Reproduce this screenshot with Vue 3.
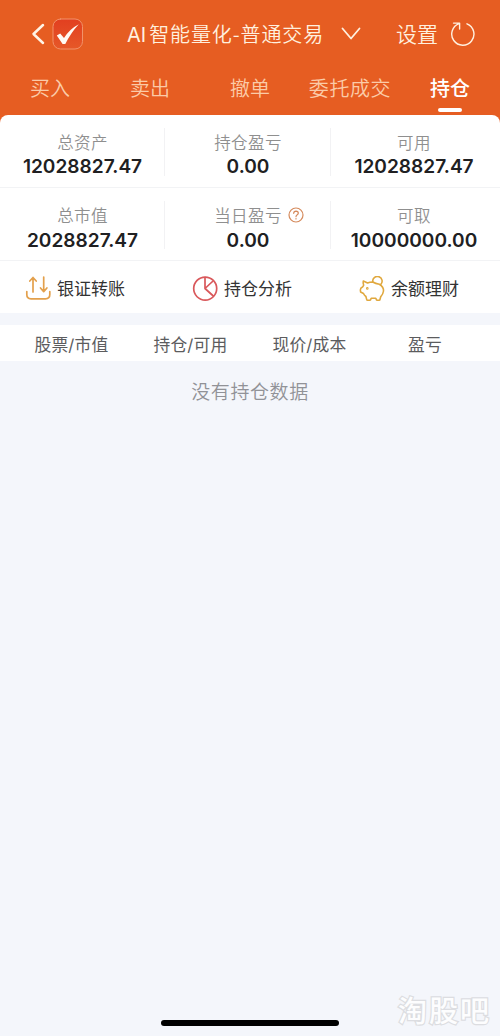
<script setup>
const tabs = ['买入', '卖出', '撤单', '委托成交', '持仓']
const assets = [
  { label: '总资产', value: '12028827.47' },
  { label: '持仓盈亏', value: '0.00' },
  { label: '可用', value: '12028827.47' },
  { label: '总市值', value: '2028827.47' },
  { label: '当日盈亏', value: '0.00', help: true },
  { label: '可取', value: '10000000.00' }
]
const columns = ['股票/市值', '持仓/可用', '现价/成本', '盈亏']
</script>

<template>
  <div class="screen">
    <header class="top">
      <div class="nav">
        <svg class="back" width="14" height="24" viewBox="0 0 14 24"><path d="M12 3 L2.500 12 L12 21" /></svg>
        <svg class="logo" width="32" height="32" viewBox="0 0 32 32">
          <defs>
            <linearGradient id="logoFill" x1="0" y1="0" x2="0" y2="1">
              <stop offset="0" stop-color="#e23f20" />
              <stop offset="1" stop-color="#e65828" />
            </linearGradient>
          </defs>
          <rect x="1" y="1" width="29.5" height="30" rx="7.5" fill="url(#logoFill)" stroke="#f2926a" stroke-width="1" />
          <path d="M4.800 17.500 L8.200 15.600 L12 20 Q17.500 11 26.800 6.200 Q19 14.500 13.300 26 L10.600 26 Z" fill="#fffaf3" />
        </svg>
        <h1 class="title">AI<span class="cjk">智能量化-普通交易</span></h1>
        <svg class="chevron" width="20" height="14" viewBox="0 0 20 14"><path d="M1.500 1.500 L10 11.500 L18.500 1.500" /></svg>
        <span class="settings">设置</span>
        <svg class="refresh" width="26" height="26" viewBox="0 0 26 26">
          <path d="M17 2.800 A11.100 11.100 0 1 1 9.200 2.600 M3.500 2.100 H9.600 V8" />
        </svg>
      </div>
      <nav class="tabs">
        <span v-for="(tab, i) in tabs" :key="tab" class="tab" :class="{ active: i === 4 }">{{ tab }}</span>
      </nav>
    </header>

    <main>
      <section class="assets">
        <div v-for="a in assets" :key="a.label" class="cell">
          <div class="label">
            <span class="label-text">{{ a.label }}
              <svg v-if="a.help" class="help" width="16" height="16" viewBox="0 0 16 16">
                <circle cx="8" cy="8" r="7" />
                <path d="M5.700 6.300 Q5.800 4.100 8 4.100 Q10.300 4.200 10.300 6.100 Q10.200 7.200 9 7.900 Q8 8.500 8 9.700 M8 11.600 V12" />
              </svg>
            </span>
          </div>
          <div class="value">{{ a.value }}</div>
        </div>
      </section>

      <section class="actions">
        <div class="action">
          <svg width="26" height="26" viewBox="0 0 26 26" class="transfer">
            <path d="M1.800 15.500 V18.500 Q1.800 22.800 6 22.800 H20.500 Q24.800 22.800 24.800 18.500 V15.500" />
            <path d="M8 16 V1.500 M4.800 5 L8 1.500 L11.200 5 M18.700 1 V15.500 M15.500 12 L18.700 15.700 L21.900 12" />
          </svg>
          <span>银证转账</span>
        </div>
        <div class="action">
          <svg width="26" height="26" viewBox="0 0 26 26" class="analysis">
            <circle cx="13.200" cy="12.600" r="11.500" />
            <path d="M13 1.500 V12.500 L20.500 5.500 M13 12.500 L21.300 20" />
          </svg>
          <span>持仓分析</span>
        </div>
        <div class="action">
          <svg width="26" height="26" viewBox="0 0 26 26" class="piggy">
            <path d="M13.800 6 A4.700 4.700 0 1 1 21.600 8.600" />
            <path d="M4.300 5 L8.600 7 Q10.500 6.100 13.800 6 Q16.500 7.700 20.300 8.200 Q24.800 10.800 24.500 15 Q24 18.500 21.800 20.600 L20.800 23.900 Q19.200 24.600 17.500 23.900 L16.800 22.300 H12.200 L11.500 23.900 Q9.500 24.600 7.800 23.900 L6.900 20.500 Q5.200 19.200 4.500 17.500 L1.600 16 Q1 14 1.800 12.200 Q4.300 11 4.700 9.200 Q3.800 7 4.300 5 Z" />
            <circle cx="8.300" cy="12.400" r=".5" />
          </svg>
          <span>余额理财</span>
        </div>
      </section>

      <section class="table-head">
        <span v-for="c in columns" :key="c">{{ c }}</span>
      </section>
      <p class="empty">没有持仓数据</p>
    </main>

    <div class="home-bar"></div>
    <div class="watermark">淘股吧</div>
  </div>
</template>

<style>
body {
  margin: 0;
}
</style>

<style scoped>
.screen {
  position: relative;
  display: flex;
  flex-direction: column;
  width: 500px;
  height: 1036px;
  overflow: hidden;
  background: #f4f6fb;
  font-family: Inter, "Noto Sans CJK SC", sans-serif;
  white-space: nowrap;
}
.top {
  height: 123px;
  flex: none;
  background: #e65d22;
  color: #fff0df;
}
.nav {
  display: flex;
  align-items: center;
  height: 68px;
  box-sizing: border-box;
  padding-left: 31px;
}
svg {
  flex: none;
  fill: none;
  stroke-linecap: round;
  stroke-linejoin: round;
}
.back {
  stroke: #fff4e6;
  stroke-width: 2.5;
}
.logo {
  margin-left: 7px;
}
.title {
  margin: 1px 0 0 43px;
  width: 197px;
  font-size: 20px;
  font-weight: 400;
  line-height: 30px;
}
.cjk {
  margin-left: 3px;
  font-family: "Noto Sans CJK SC", sans-serif;
  font-weight: 350;
  letter-spacing: 0.9px;
}
.chevron {
  margin-left: 17px;
  stroke: #fff0df;
  stroke-width: 1.8;
}
.settings {
  width: 43px;
  margin: 2px 0 0 35px;
  font-size: 21px;
  font-weight: 350;
  line-height: 30px;
}
.refresh {
  margin-left: 11px;
  stroke: #fff0df;
  stroke-width: 1.4;
}
.tabs {
  display: grid;
  grid-template-columns: repeat(5, 100px);
  height: 47px;
}
.tab {
  display: flex;
  flex-direction: column;
  align-items: center;
  padding-top: 2px;
  font-size: 20px;
  font-weight: 350;
  line-height: 38px;
  color: #fbcba8;
}
.tab:nth-child(4) {
  letter-spacing: 0.6px;
}
.active {
  color: #fff;
  font-weight: 500;
}
.active::after {
  content: "";
  width: 24px;
  height: 4px;
  border-radius: 2px;
  background: #fff;
}
main {
  margin-top: -8px;
}
.assets {
  display: grid;
  grid-template-columns: 165px 166px 169px;
  grid-template-rows: 73px 73px;
  background: #fff;
  border-radius: 8px 8px 0 0;
}
.cell {
  position: relative;
  box-sizing: border-box;
  padding-top: 16px;
  text-align: center;
  border-bottom: 1px solid #f2f3f5;
}
.cell:nth-child(3n) {
  padding-right: 3px;
}
.cell:not(:nth-child(3n))::after {
  content: "";
  position: absolute;
  top: 13px;
  right: 0;
  width: 1px;
  height: 48px;
  background: #f2f2f4;
}
.label {
  font-size: 16.5px;
  font-weight: 350;
  line-height: 24px;
  letter-spacing: 0.4px;
  color: #8f8f8f;
}
.label-text {
  position: relative;
}
.help {
  position: absolute;
  left: calc(100% + 6px);
  top: 1px;
  stroke: #d58a5c;
  stroke-width: 1.2;
}
.value {
  font-size: 19.1px;
  font-weight: 600;
  line-height: 23px;
  color: #202022;
}
.cell:nth-child(n + 4) .value {
  line-height: 24px;
}
.actions {
  display: grid;
  grid-template-columns: 167px 167px 166px;
  height: 52px;
  box-sizing: border-box;
  padding-top: 3px;
  background: #fff;
}
.action {
  display: flex;
  align-items: center;
  gap: 6px;
  padding-left: 25px;
  font-size: 17px;
  line-height: 48px;
  color: #333;
}
.transfer {
  stroke: #e3a04c;
  stroke-width: 1.7;
}
.analysis {
  stroke: #d9585b;
  stroke-width: 1.7;
}
.piggy {
  stroke: #e0a83e;
  stroke-width: 1.6;
}
.table-head {
  display: grid;
  grid-template-columns: 119px 119px 119px 112px;
  margin-top: 12px;
  padding-left: 12px;
  height: 36px;
  line-height: 40px;
  background: #fff;
  font-size: 16.8px;
  letter-spacing: 0.2px;
  color: #5c5c5e;
  text-align: center;
}
.empty {
  margin: 18px 0 0;
  font-size: 19px;
  font-weight: 350;
  line-height: 28px;
  letter-spacing: 0.6px;
  text-align: center;
  color: #919297;
}
.home-bar {
  position: absolute;
  left: 161px;
  top: 1020px;
  width: 178px;
  height: 6px;
  border-radius: 3px;
  background: #000;
}
.watermark {
  position: absolute;
  left: 398px;
  top: 990px;
  font-size: 29px;
  line-height: 44px;
  letter-spacing: 2px;
  font-weight: 500;
  color: #fdfdfe;
  -webkit-text-stroke: 2.4px #dcdde1;
  paint-order: stroke fill;
}
</style>
